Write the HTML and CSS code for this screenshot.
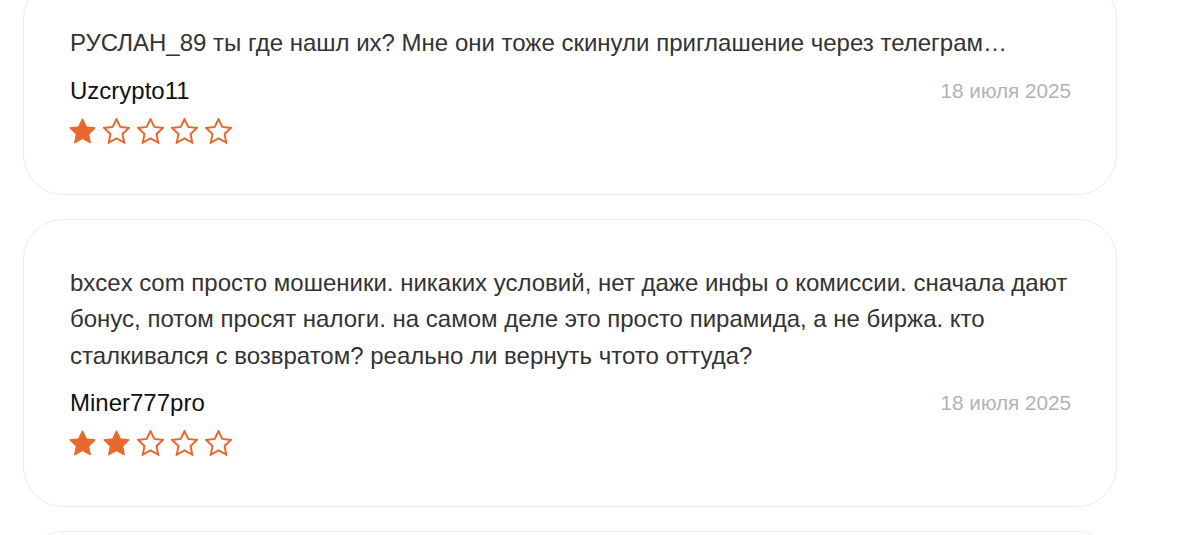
FILE: index.html
```html
<!DOCTYPE html>
<html lang="ru">
<head>
<meta charset="utf-8">
<link rel="stylesheet" href="styles.css">
</head>
<body>
<div class="reviews">
  <div class="card">
    <p class="text">РУСЛАН_89 ты где нашл их? Мне они тоже скинули приглашение через телеграм…</p>
    <div class="meta">
      <span class="user">Uzcrypto11</span>
      <span class="date">18 июля 2025</span>
    </div>
    <div class="stars">
      <svg class="star" viewBox="2 2 20 20"><polygon class="full" points="12,2.8 14.8,8.6 21.2,9.4 16.5,13.8 17.7,20.2 12,17.1 6.3,20.2 7.5,13.8 2.8,9.4 9.2,8.6"/></svg>
      <svg class="star" viewBox="2 2 20 20"><polygon class="empty" points="12,2.8 14.8,8.6 21.2,9.4 16.5,13.8 17.7,20.2 12,17.1 6.3,20.2 7.5,13.8 2.8,9.4 9.2,8.6"/></svg>
      <svg class="star" viewBox="2 2 20 20"><polygon class="empty" points="12,2.8 14.8,8.6 21.2,9.4 16.5,13.8 17.7,20.2 12,17.1 6.3,20.2 7.5,13.8 2.8,9.4 9.2,8.6"/></svg>
      <svg class="star" viewBox="2 2 20 20"><polygon class="empty" points="12,2.8 14.8,8.6 21.2,9.4 16.5,13.8 17.7,20.2 12,17.1 6.3,20.2 7.5,13.8 2.8,9.4 9.2,8.6"/></svg>
      <svg class="star" viewBox="2 2 20 20"><polygon class="empty" points="12,2.8 14.8,8.6 21.2,9.4 16.5,13.8 17.7,20.2 12,17.1 6.3,20.2 7.5,13.8 2.8,9.4 9.2,8.6"/></svg>
    </div>
  </div>
  <div class="card">
    <p class="text">bxcex com просто мошеники. никаких условий, нет даже инфы о комиссии. сначала дают бонус, потом просят налоги. на самом деле это просто пирамида, а не биржа. кто сталкивался с возвратом? реально ли вернуть чтото оттуда?</p>
    <div class="meta">
      <span class="user">Miner777pro</span>
      <span class="date">18 июля 2025</span>
    </div>
    <div class="stars">
      <svg class="star" viewBox="2 2 20 20"><polygon class="full" points="12,2.8 14.8,8.6 21.2,9.4 16.5,13.8 17.7,20.2 12,17.1 6.3,20.2 7.5,13.8 2.8,9.4 9.2,8.6"/></svg>
      <svg class="star" viewBox="2 2 20 20"><polygon class="full" points="12,2.8 14.8,8.6 21.2,9.4 16.5,13.8 17.7,20.2 12,17.1 6.3,20.2 7.5,13.8 2.8,9.4 9.2,8.6"/></svg>
      <svg class="star" viewBox="2 2 20 20"><polygon class="empty" points="12,2.8 14.8,8.6 21.2,9.4 16.5,13.8 17.7,20.2 12,17.1 6.3,20.2 7.5,13.8 2.8,9.4 9.2,8.6"/></svg>
      <svg class="star" viewBox="2 2 20 20"><polygon class="empty" points="12,2.8 14.8,8.6 21.2,9.4 16.5,13.8 17.7,20.2 12,17.1 6.3,20.2 7.5,13.8 2.8,9.4 9.2,8.6"/></svg>
      <svg class="star" viewBox="2 2 20 20"><polygon class="empty" points="12,2.8 14.8,8.6 21.2,9.4 16.5,13.8 17.7,20.2 12,17.1 6.3,20.2 7.5,13.8 2.8,9.4 9.2,8.6"/></svg>
    </div>
  </div>
  <div class="card card-cut"></div>
</div>
</body>
</html>
```

FILE: styles.css
```css
html, body {
  margin: 0;
  padding: 0;
  background: #ffffff;
}
body {
  font-family: "Liberation Sans", Arial, sans-serif;
  overflow: hidden;
  height: 535px;
}
.reviews {
  width: 1094px;
  margin: -21px 0 0 23px;
  display: flex;
  flex-direction: column;
  gap: 24px;
}
.card {
  box-sizing: border-box;
  border: 1px solid #ececec;
  border-radius: 40px;
  padding: 45px 45px 49px 46px;
  background: #fff;
}
.card-cut {
  height: 120px;
}
.text {
  margin: 0;
  font-size: 24px;
  line-height: 36.5px;
  color: #333333;
}
.meta {
  display: flex;
  justify-content: space-between;
  align-items: baseline;
  margin-top: 14px;
}
.user {
  font-size: 24px;
  line-height: 30px;
  color: #111111;
}
.date {
  font-size: 20.7px;
  line-height: 30px;
  color: #b3b3b3;
  position: relative;
  top: -1px;
}
.stars {
  display: flex;
  gap: 7px;
  margin-top: 11px;
  margin-left: -1px;
}
.star {
  width: 27px;
  height: 27px;
  display: block;
}
.full {
  fill: #e8692e;
  stroke: #e8692e;
  stroke-width: 1;
  stroke-linejoin: round;
}
.empty {
  fill: none;
  stroke: #e8692e;
  stroke-width: 1.5;
  stroke-linejoin: miter;
}
```
